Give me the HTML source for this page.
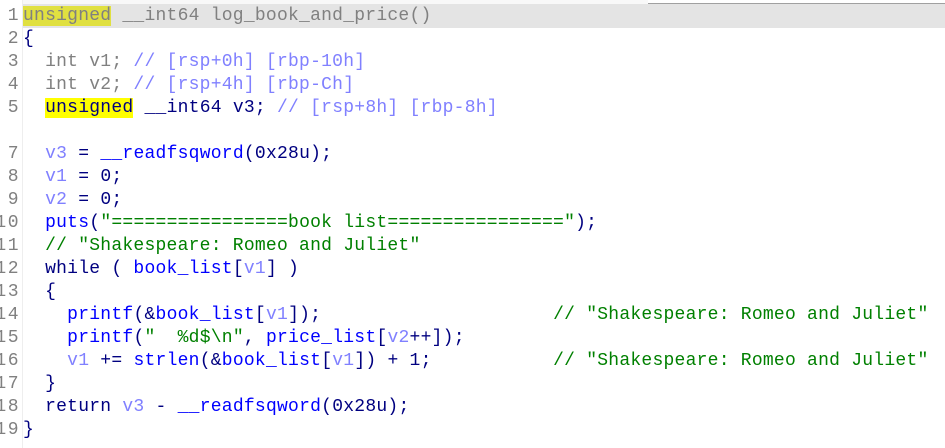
<!DOCTYPE html>
<html><head><meta charset="utf-8"><style>
html,body{margin:0;padding:0;background:#fff;width:945px;height:448px;overflow:hidden;position:relative}
.top{position:absolute;left:0;top:0;width:648px;height:4px;background:#f8f8f8}
.topl{position:absolute;left:648px;top:3px;width:297px;height:1px;background:#a0a0a0}
.cur{position:absolute;left:22px;top:4px;width:923px;height:24px;background:#e4e4e4}
.gut{position:absolute;left:0;top:0;width:22px;height:448px;background:#fff;overflow:hidden;border-right:1px solid #eeeeee}
.ln{position:absolute;right:2px;font:18px/23px "Liberation Mono",monospace;color:#808080;letter-spacing:1.5px;white-space:pre}
.code{position:absolute;left:23px;font:18px/23px "Liberation Mono",monospace;letter-spacing:0.24px;color:#000080;white-space:pre}
.g{color:#808080}.v{color:#8080ff}.f{color:#0000ff}.s{color:#008000}.c{color:#8080ff}
.y{background:#ffff00}.y1{background:#e0e040}
</style></head><body>
<div class="top"></div><div class="topl"></div>
<div class="cur"></div>
<div class="gut">
<div class="ln" style="top:5px">1</div>
<div class="ln" style="top:28px">2</div>
<div class="ln" style="top:51px">3</div>
<div class="ln" style="top:74px">4</div>
<div class="ln" style="top:97px">5</div>
<div class="ln" style="top:143px">7</div>
<div class="ln" style="top:166px">8</div>
<div class="ln" style="top:189px">9</div>
<div class="ln" style="top:212px">10</div>
<div class="ln" style="top:235px">11</div>
<div class="ln" style="top:258px">12</div>
<div class="ln" style="top:281px">13</div>
<div class="ln" style="top:304px">14</div>
<div class="ln" style="top:327px">15</div>
<div class="ln" style="top:350px">16</div>
<div class="ln" style="top:373px">17</div>
<div class="ln" style="top:396px">18</div>
<div class="ln" style="top:419px">19</div>
</div>
<div class="code g" style="top:5px"><span class="y1">unsigned</span> __int64 log_book_and_price()</div>
<div class="code" style="top:28px">{</div>
<div class="code" style="top:51px"><span class="g">  int v1; </span><span class="c">// [rsp+0h] [rbp-10h]</span></div>
<div class="code" style="top:74px"><span class="g">  int v2; </span><span class="c">// [rsp+4h] [rbp-Ch]</span></div>
<div class="code" style="top:97px">  <span class="y">unsigned</span> __int64 v3; <span class="c">// [rsp+8h] [rbp-8h]</span></div>
<div class="code" style="top:143px">  <span class="v">v3</span> = <span class="f">__readfsqword</span>(0x28u);</div>
<div class="code" style="top:166px">  <span class="v">v1</span> = 0;</div>
<div class="code" style="top:189px">  <span class="v">v2</span> = 0;</div>
<div class="code" style="top:212px">  <span class="f">puts</span>(<span class="s">"================book list================"</span>);</div>
<div class="code s" style="top:235px">  // "Shakespeare: Romeo and Juliet"</div>
<div class="code" style="top:258px">  while ( <span class="f">book_list</span>[<span class="v">v1</span>] )</div>
<div class="code" style="top:281px">  {</div>
<div class="code" style="top:304px">    <span class="f">printf</span>(&amp;<span class="f">book_list</span>[<span class="v">v1</span>]);                     <span class="s">// "Shakespeare: Romeo and Juliet"</span></div>
<div class="code" style="top:327px">    <span class="f">printf</span>(<span class="s">"  %d$\n"</span>, <span class="f">price_list</span>[<span class="v">v2</span>++]);</div>
<div class="code" style="top:350px">    <span class="v">v1</span> += <span class="f">strlen</span>(&amp;<span class="f">book_list</span>[<span class="v">v1</span>]) + 1;           <span class="s">// "Shakespeare: Romeo and Juliet"</span></div>
<div class="code" style="top:373px">  }</div>
<div class="code" style="top:396px">  return <span class="v">v3</span> - <span class="f">__readfsqword</span>(0x28u);</div>
<div class="code" style="top:419px">}</div>
</body></html>
